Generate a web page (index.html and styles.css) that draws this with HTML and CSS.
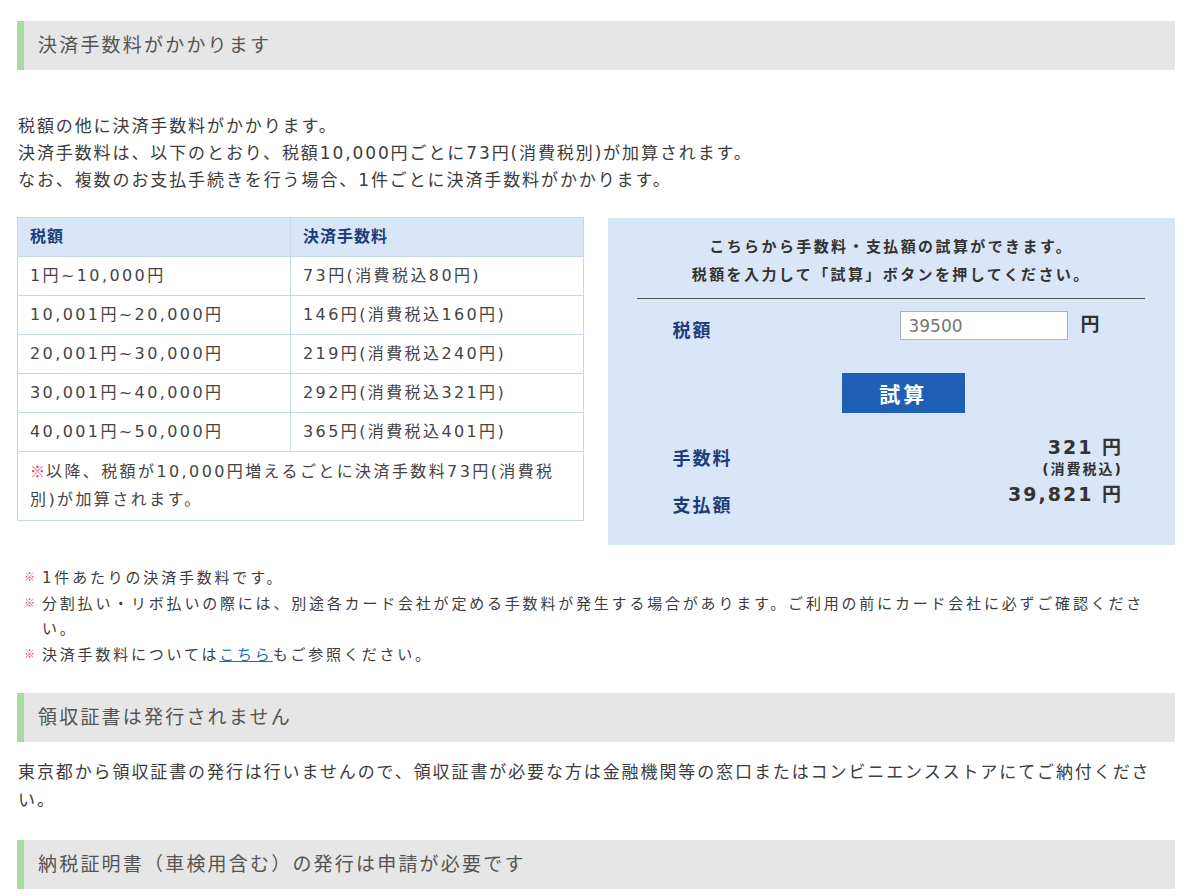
FILE: index.html
```html
<!DOCTYPE html>
<html lang="ja">
<head>
<meta charset="utf-8">
<title>決済手数料</title>
<link rel="stylesheet" href="styles.css">
</head>
<body>
<div class="page">
  <h2 class="sec-head">決済手数料がかかります</h2>
  <p class="lead">税額の他に決済手数料がかかります。<br>決済手数料は、以下のとおり、税額10,000円ごとに73円(消費税別)が加算されます。<br>なお、複数のお支払手続きを行う場合、1件ごとに決済手数料がかかります。</p>

  <div class="calc-row">
    <table class="fee-table">
      <thead>
        <tr><th class="col1">税額</th><th>決済手数料</th></tr>
      </thead>
      <tbody>
        <tr><td class="col1">1円~10,000円</td><td>73円(消費税込80円)</td></tr>
        <tr><td class="col1">10,001円~20,000円</td><td>146円(消費税込160円)</td></tr>
        <tr><td class="col1">20,001円~30,000円</td><td>219円(消費税込240円)</td></tr>
        <tr><td class="col1">30,001円~40,000円</td><td>292円(消費税込321円)</td></tr>
        <tr><td class="col1">40,001円~50,000円</td><td>365円(消費税込401円)</td></tr>
        <tr><td class="note-cell" colspan="2"><span class="kome">※</span>以降、税額が10,000円増えるごとに決済手数料73円(消費税別)が加算されます。</td></tr>
      </tbody>
    </table>

    <div class="calc-box">
      <p class="calc-intro">こちらから手数料・支払額の試算ができます。<br>税額を入力して「試算」ボタンを押してください。</p>
      <div class="calc-input-row">
        <span class="calc-label calc-label-tax">税額</span>
        <input class="calc-input" type="text" value="39500">
        <span class="yen">円</span>
      </div>
      <div class="btn-wrap"><button class="calc-btn" type="button">試算</button></div>
      <div class="calc-results">
        <div class="labels">
          <span class="calc-label">手数料</span>
          <span class="calc-label">支払額</span>
        </div>
        <div class="values">
          <span class="val">321 円</span>
          <span class="val-sub">(消費税込)</span>
          <span class="val val-total">39,821 円</span>
        </div>
      </div>
    </div>
  </div>

  <ul class="notes">
    <li><span class="n-mark">※</span><span class="n-text">1件あたりの決済手数料です。</span></li>
    <li><span class="n-mark">※</span><span class="n-text">分割払い・リボ払いの際には、別途各カード会社が定める手数料が発生する場合があります。ご利用の前にカード会社に必ずご確認ください。</span></li>
    <li><span class="n-mark">※</span><span class="n-text">決済手数料については<a href="#">こちら</a>もご参照ください。</span></li>
  </ul>

  <h2 class="sec-head sec-head-2">領収証書は発行されません</h2>
  <p class="body-text">東京都から領収証書の発行は行いませんので、領収証書が必要な方は金融機関等の窓口またはコンビニエンスストアにてご納付ください。</p>

  <h2 class="sec-head sec-head-3">納税証明書（車検用含む）の発行は申請が必要です</h2>
</div>
</body>
</html>
```
FILE: styles.css
```css
* { box-sizing: border-box; }

html, body {
  margin: 0;
  padding: 0;
  background: #ffffff;
}

body {
  font-family: "DejaVu Sans", "Noto Sans CJK JP", sans-serif;
  color: #3c3c3c;
}

.page {
  padding: 21px 25px 0 17px;
}

.sec-head {
  margin: 0;
  height: 49px;
  line-height: 49px;
  background: #e6e6e6;
  border-left: 7px solid #a8dca2;
  padding-left: 14px;
  font-size: 19px;
  font-weight: normal;
  letter-spacing: 2.2px;
  color: #555555;
}

.sec-head-2 { margin-top: 25px; }
.sec-head-3 { margin-top: 26px; }

.lead {
  margin: 43px 0 0 1px;
  font-size: 17px;
  line-height: 27px;
  letter-spacing: 1.9px;
}

.body-text {
  margin: 16px 0 0 1px;
  font-size: 17px;
  line-height: 28px;
  letter-spacing: 1.9px;
}

/* calculator row */
.calc-row {
  margin-top: 23px;
  display: flex;
  align-items: flex-start;
  gap: 24px;
}

.fee-table {
  width: 568px;
  border-collapse: collapse;
  border: 1px solid #c8d7ec;
  font-size: 16px;
  letter-spacing: 2.4px;
  color: #444444;
}

.fee-table th,
.fee-table td {
  border: 1px solid #c8d7ec;
  padding: 8px 12px;
  line-height: 22px;
  height: 39px;
  text-align: left;
  vertical-align: middle;
}

.fee-table th {
  background: #d9e6f8;
  color: #1d3d78;
  font-weight: bold;
  letter-spacing: 1px;
}

.fee-table .col1 { width: 273px; }

.fee-table td.note-cell {
  padding: 6px 12px;
  line-height: 28px;
  height: 68px;
}

.kome {
  display: inline-block;
  width: 16px;
  color: #e4405e;
  font-family: "Noto Sans CJK JP", sans-serif;
  font-size: 15px;
  line-height: 22px;
  letter-spacing: 0;
}

.calc-box {
  width: 567px;
  margin-top: 1px;
  background: #d9e6f8;
  padding: 15px 30px 27px 29px;
}

.calc-intro {
  margin: 0;
  text-align: center;
  font-size: 15px;
  line-height: 28px;
  font-weight: bold;
  letter-spacing: 2.4px;
  color: #333333;
  padding-bottom: 9px;
  border-bottom: 1px solid #555555;
}

.calc-input-row {
  margin-top: 12px;
  height: 29px;
  display: flex;
  align-items: flex-start;
  padding-left: 35px;
}

.calc-label {
  font-size: 18px;
  font-weight: bold;
  color: #1d3d78;
  letter-spacing: 2px;
  line-height: 24px;
}

.calc-label-tax {
  width: 228px;
  margin-top: 8px;
}

.calc-input {
  width: 168px;
  height: 29px;
  border: 1px solid #a9b3c4;
  background: #ffffff;
  padding: 0 7px;
  font-family: "DejaVu Sans", "Noto Sans CJK JP", sans-serif;
  font-size: 17px;
  color: #777777;
  outline: none;
}

.yen {
  margin-left: 12px;
  font-size: 19px;
  font-weight: bold;
  color: #333333;
  line-height: 26px;
}

.btn-wrap {
  margin-top: 33px;
  display: flex;
  justify-content: center;
  padding-left: 24px;
}

.calc-btn {
  width: 123px;
  height: 40px;
  border: none;
  background: #1f5fb6;
  color: #ffffff;
  font-family: "DejaVu Sans", "Noto Sans CJK JP", sans-serif;
  font-size: 21px;
  font-weight: bold;
  letter-spacing: 3px;
  padding: 0;
}

.calc-results {
  margin-top: 22px;
  display: flex;
  justify-content: space-between;
  padding: 0 22px 0 35px;
}

.labels {
  display: flex;
  flex-direction: column;
  gap: 23px;
  padding-top: 12px;
}

.values {
  display: flex;
  flex-direction: column;
  align-items: flex-end;
  color: #333333;
}

.val {
  font-size: 19px;
  font-weight: bold;
  line-height: 24px;
  letter-spacing: 2px;
}

.val-sub {
  margin-top: 2px;
  font-size: 14px;
  font-weight: bold;
  line-height: 16px;
  letter-spacing: 2px;
}

.val-total { margin-top: 5px; }

/* notes */
.notes {
  list-style: none;
  margin: 21px 0 0 0;
  padding: 0;
  font-size: 15px;
  line-height: 25.5px;
  letter-spacing: 2.8px;
}

.notes li {
  display: flex;
}

.n-mark {
  width: 25px;
  padding-left: 7px;
  flex-shrink: 0;
  color: #e4405e;
  font-family: "Noto Sans CJK JP", sans-serif;
  font-size: 11px;
  line-height: 21px;
  letter-spacing: 0;
}

.n-text { flex: 1; }

.notes a {
  color: #1a6fb8;
  text-decoration: underline;
}
```
